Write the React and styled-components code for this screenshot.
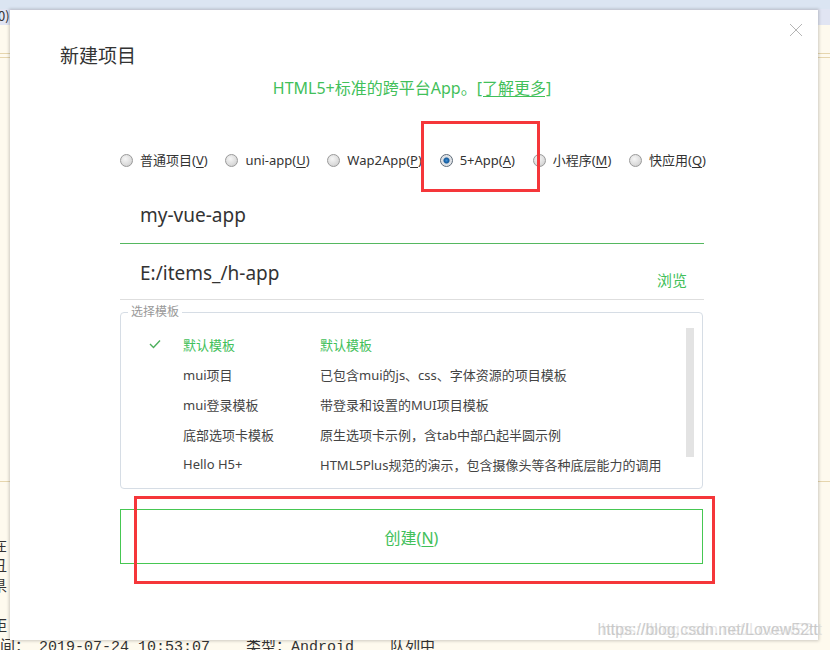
import React from "react";
import styled, { createGlobalStyle } from "styled-components";

const GlobalStyle = createGlobalStyle`
  html, body { margin: 0; padding: 0; background: #fefaee; }
  body { font-family: "Noto Sans", "Noto Sans CJK SC", sans-serif; }
`;

const GREEN = "#42c05a";

const Screen = styled.div`
  position: relative;
  width: 830px;
  height: 650px;
  overflow: hidden;
  background: #fefaee;
  display: flex;
  flex-direction: column;
`;

const MenuBar = styled.div`
  flex: none;
  height: 25px;
  box-sizing: border-box;
  padding-top: 6px;
  background: linear-gradient(#dbe5f2 0, #dbe5f2 9px, #e1e5f3 9px, #e1e5f3 100%);
  display: flex;
  align-items: center;
  gap: 20px;
  font: 13px "Noto Sans CJK SC", sans-serif;
  color: #333;
`;

const MenuItem = styled.span`
  margin-left: ${(p) => (p.$first ? "-2px" : "0")};
`;

const TabStrip = styled.div`
  flex: none;
  height: 28px;
  border-bottom: 1px solid #e6d6ae;
`;

const TabLine = styled.div`
  flex: none;
  height: 3px;
  border-bottom: 1px solid #e6d6ae;
`;

const Editor = styled.div`
  flex: 1;
  border-bottom: 1px solid #e6d6ae;
`;

const Console = styled.div`
  flex: none;
  height: 168px;
  box-sizing: border-box;
  padding-top: 56px;
  font: 15px/20px "Liberation Mono", "Noto Sans CJK SC", monospace;
  color: #333;
`;

const ConsoleLine = styled.div`
  height: 20px;
  white-space: pre;
  margin-left: ${(p) => p.$shift || "-8px"};
`;

const Dialog = styled.div`
  position: absolute;
  left: 10px;
  top: 10px;
  width: 808px;
  height: 630px;
  background: #fff;
  box-shadow: 0 0 3px 1px rgba(0, 0, 0, 0.2);
  display: flex;
  flex-direction: column;
`;

const CloseButton = styled.button`
  position: absolute;
  top: 13px;
  right: 15px;
  width: 14px;
  height: 14px;
  padding: 0;
  border: 0;
  background: none;
  display: flex;
`;

const Title = styled.h1`
  margin: 33px 0 0 50px;
  font-size: 19px;
  line-height: 26px;
  font-weight: normal;
  color: #333;
`;

const Body = styled.div`
  margin-left: 110px;
  width: 584px;
  display: flex;
  flex-direction: column;
`;

const Subtitle = styled.p`
  margin: 8px 0 0;
  text-align: center;
  font-size: 16px;
  line-height: 22px;
  color: ${GREEN};
`;

const MoreLink = styled.a`
  color: ${GREEN};
  text-decoration: underline;
  text-underline-offset: 2px;
`;

const RadioRow = styled.div`
  margin-top: 51px;
  height: 20px;
  display: flex;
  justify-content: space-between;
  align-items: center;
  margin-right: -2px;
`;

const RadioItem = styled.label`
  display: flex;
  align-items: center;
  gap: 7px;
  font-size: 13px;
  line-height: 20px;
  color: #333;
`;

const RadioDot = styled.span`
  width: 11px;
  height: 11px;
  border-radius: 50%;
  border: 1px solid ${(p) => (p.$checked ? "#5d6a78" : "#9a9a9a")};
  background: ${(p) =>
    p.$checked
      ? "radial-gradient(circle, #3d8fd6 0, #145a9c 2.5px, #d9dde2 3.5px, #f4f4f4 100%)"
      : "radial-gradient(circle at 40% 35%, #f6f6f6 0, #dcdcdc 60%, #c4c4c4 100%)"};
  flex: none;
`;

const Key = styled.span`
  text-decoration: underline;
  text-underline-offset: 2px;
`;

const Field = styled.div`
  margin-top: ${(p) => p.$mt || 0}px;
  height: ${(p) => p.$h}px;
  border-bottom: 1px solid ${(p) => p.$line};
  display: flex;
  align-items: center;
  justify-content: space-between;
  padding: ${(p) => p.$pt || 0}px 17px 0 20px;
  box-sizing: content-box;
`;

const FieldText = styled.span`
  font-size: 19px;
  color: #333;
`;

const Browse = styled.span`
  font-size: 15px;
  color: ${GREEN};
  margin-top: 14px;
`;

const TemplateBox = styled.div`
  position: relative;
  margin-top: 12px;
  border: 1px solid #d6dde5;
  border-radius: 4px;
  padding: 16px 0 9px;
  margin-right: 1px;
`;

const Legend = styled.span`
  position: absolute;
  top: -9px;
  left: 7px;
  padding: 0 3px;
  background: #fff;
  font-size: 12px;
  line-height: 16px;
  color: #999;
`;

const Row = styled.div`
  display: grid;
  grid-template-columns: 62px 137px 1fr;
  height: 30px;
  align-items: center;
  font-size: 13px;
  color: ${(p) => (p.$active ? GREEN : "#444")};
`;

const CheckCell = styled.span`
  display: flex;
  padding-left: 28px;
`;

const ScrollThumb = styled.div`
  position: absolute;
  top: 15px;
  right: 8px;
  width: 8px;
  height: 129px;
  background: #e3e3e3;
`;

const CreateButton = styled.button`
  margin-top: 20px;
  height: 55px;
  box-sizing: border-box;
  border: 1px solid #46c752;
  background: #fff;
  color: ${GREEN};
  font-family: inherit;
  font-size: 16px;
  margin-right: 1px;
`;

const Annotation = styled.div`
  position: absolute;
  left: ${(p) => p.$x}px;
  top: ${(p) => p.$y}px;
  width: ${(p) => p.$w}px;
  height: ${(p) => p.$h}px;
  box-sizing: border-box;
  border: 3px solid #f5363a;
`;

const Watermark = styled.div`
  position: absolute;
  right: 12px;
  top: 621px;
  font: 16px "Liberation Sans", sans-serif;
  color: rgba(190, 190, 190, 0.75);
  text-shadow: 4px 0 0 rgba(205, 205, 205, 0.5);
`;

const radios = [
  { label: "普通项目", key: "V" },
  { label: "uni-app", key: "U" },
  { label: "Wap2App", key: "P" },
  { label: "5+App", key: "A", checked: true },
  { label: "小程序", key: "M" },
  { label: "快应用", key: "Q" },
];

const templates = [
  ["默认模板", "默认模板", true],
  ["mui项目", "已包含mui的js、css、字体资源的项目模板"],
  ["mui登录模板", "带登录和设置的MUI项目模板"],
  ["底部选项卡模板", "原生选项卡示例，含tab中部凸起半圆示例"],
  ["Hello H5+", "HTML5Plus规范的演示，包含摄像头等各种底层能力的调用"],
];

export default function App() {
  return (
    <>
      <GlobalStyle />
      <Screen>
        <MenuBar>
          <MenuItem $first>0)</MenuItem>
          <MenuItem>运行(R)</MenuItem>
          <MenuItem>发行(U)</MenuItem>
          <MenuItem>视图(V)</MenuItem>
          <MenuItem>工具(T)</MenuItem>
          <MenuItem>帮助(Y)</MenuItem>
        </MenuBar>
        <TabStrip />
        <TabLine />
        <Editor />
        <Console>
          <ConsoleLine>在</ConsoleLine>
          <ConsoleLine>丑</ConsoleLine>
          <ConsoleLine>県</ConsoleLine>
          <ConsoleLine> </ConsoleLine>
          <ConsoleLine>距</ConsoleLine>
          <ConsoleLine $shift="-15px">时间： 2019-07-24 10:53:07    类型：Android    队列中</ConsoleLine>
        </Console>

        <Dialog>
          <CloseButton aria-label="关闭">
            <svg width="14" height="14" viewBox="0 0 14 14">
              <path d="M1 1 L13 13 M13 1 L1 13" stroke="#b5b5b5" strokeWidth="1" fill="none" />
            </svg>
          </CloseButton>
          <Title>新建项目</Title>
          <Body>
            <Subtitle>
              HTML5+标准的跨平台App。<MoreLink>[了解更多]</MoreLink>
            </Subtitle>
            <RadioRow>
              {radios.map((r) => (
                <RadioItem key={r.key}>
                  <RadioDot $checked={r.checked} />
                  <span>
                    {r.label}(<Key>{r.key}</Key>)
                  </span>
                </RadioItem>
              ))}
            </RadioRow>
            <Field $mt={17} $h={56} $line="#55b860">
              <FieldText>my-vue-app</FieldText>
            </Field>
            <Field $h={53} $pt={2} $line="#dedede">
              <FieldText>E:/items_/h-app</FieldText>
              <Browse>浏览</Browse>
            </Field>
            <TemplateBox>
              <Legend>选择模板</Legend>
              {templates.map(([name, desc, active]) => (
                <Row key={name} $active={active}>
                  <CheckCell>
                    {active && (
                      <svg width="12" height="10" viewBox="0 0 12 10">
                        <path d="M1 5 L4.5 8.5 L11 1.5" stroke="#4caf5c" strokeWidth="1.4" fill="none" />
                      </svg>
                    )}
                  </CheckCell>
                  <span>{name}</span>
                  <span>{desc}</span>
                </Row>
              ))}
              <ScrollThumb />
            </TemplateBox>
            <CreateButton>
              创建(<Key>N</Key>)
            </CreateButton>
          </Body>
        </Dialog>

        <Annotation $x={421} $y={121} $w={119} $h={71} />
        <Annotation $x={134} $y={496} $w={581} $h={88} />
        <Watermark>https://blog.csdn.net/Lovew52tt</Watermark>
      </Screen>
    </>
  );
}
